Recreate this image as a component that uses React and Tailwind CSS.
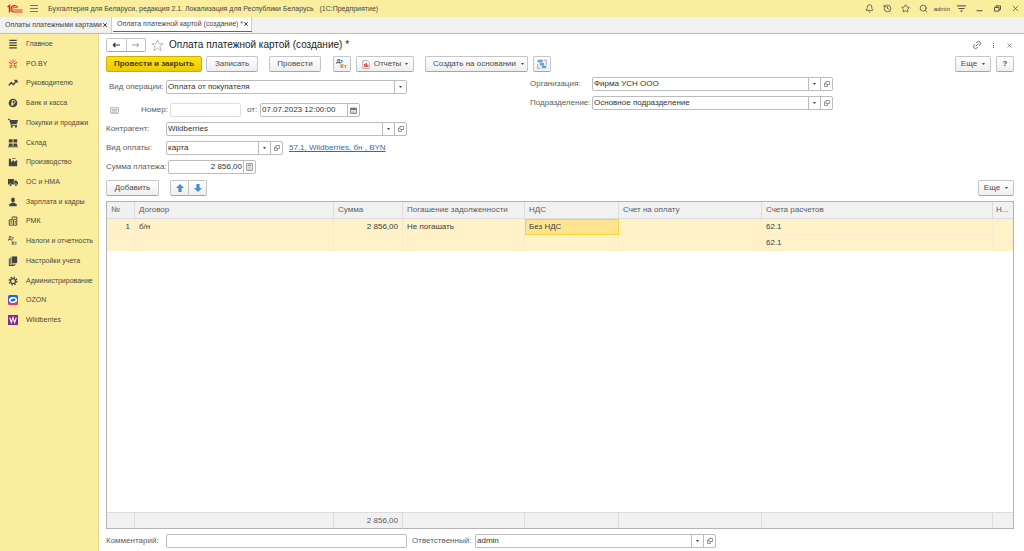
import React, { useState } from 'react';
import clsx from 'clsx';
import { Bell, History, Search, Star, Link2, X } from 'lucide-react';

const ICON = 'w-[10px] h-[10px] shrink-0';

const SectionIcon = ({ name }) => {
  const glyphs = {
    main: <path d="M1.500 1.500h9M1.500 4.500h9M1.500 7.500h9M1.500 10.500h9" stroke="#444" strokeWidth="1.500" />,
    poby: (
      <g stroke="#e2493b" strokeWidth="1.300" fill="none">
        <path d="M6 5V1M7 6l4-2M7 7l3 4M5 7l-3 4M5 6L1 4" />
        <path d="M3 1.500l1 2M9 1.500L8 3.500M1 8l2-.5M11 8l-2-.5M6 9v2" strokeWidth="0.8" />
      </g>
    ),
    chart: (
      <g fill="none" stroke="#444" strokeWidth="1.700">
        <path d="M1 9l3-3.500L6.500 8 10 3.500" />
        <path d="M7.500 2.500H11V6z" fill="#444" strokeWidth="0.6" />
      </g>
    ),
    bank: (
      <g>
        <circle cx="6" cy="6" r="5.200" fill="#444" />
        <path d="M5 9.500V3h1.800a1.600 1.600 0 010 3.400H3.800M3.800 8h3" fill="none" stroke="#fbed9e" strokeWidth="1.100" />
      </g>
    ),
    cart: (
      <g fill="#444">
        <path d="M0 1h2.300l.5 1.300H12L10.500 7.200H4.200l.3 1H11v1H3.500L1.600 2H0z" />
        <circle cx="4.500" cy="10.600" r="1.200" />
        <circle cx="9.500" cy="10.600" r="1.200" />
      </g>
    ),
    stock: <path d="M1 1.500h4.500v4H1zM6.500 1.500H11v4H6.500zM1 6.500h4.500v3H1zM6.500 6.500H11v3H6.500zM0 10h12v1H0z" fill="#444" />,
    factory: <path d="M1 11V2h2.500v4L7 3.500V6l4-2.500V11zM5 1.200h4v1H5z" fill="#444" />,
    truck: (
      <g fill="#444">
        <path d="M0 2.500h7V9H0zM7.600 4.200h2.400L12 6.500V9H7.600z" />
        <circle cx="3" cy="9.500" r="1.500" stroke="#fbed9e" strokeWidth="0.6" />
        <circle cx="9.500" cy="9.500" r="1.500" stroke="#fbed9e" strokeWidth="0.6" />
      </g>
    ),
    person: (
      <g fill="#444">
        <ellipse cx="6" cy="3.600" rx="2.300" ry="2.900" />
        <path d="M1.500 11V8.800L4.500 7h3l3 1.800V11z" />
      </g>
    ),
    rmk: (
      <g fill="none" stroke="#5a4a2c" strokeWidth="1.200">
        <path d="M1.500 4.500h5v6.500h-5zM5 3.500V1.200h5.500V11H7" />
        <path d="M3 6.500h2M3 8.500h2M7 4h2.500M8 6.500h1.500M8 8.500h1.500" />
      </g>
    ),
    books: (
      <g fill="#444">
        <path d="M4.500 0.500H11v8H4.500z" />
        <path d="M2.800 1.800h1v7.400H9.500v1H2.800z" />
        <path d="M1 3h1.100v7.900h6V12H1z" />
      </g>
    ),
    gear: (
      <g fill="none" stroke="#444">
        <circle cx="6" cy="6" r="3" strokeWidth="1.500" />
        <circle cx="6" cy="6" r="4.600" strokeWidth="1.600" strokeDasharray="1.800 1.810" />
      </g>
    ),
    ozon: (
      <g>
        <rect width="12" height="12" rx="2" fill="#1c62ea" />
        <path d="M0 8c3 3 9 2 12-3v5a2 2 0 01-2 2H2a2 2 0 01-2-2z" fill="#f0305c" />
        <ellipse cx="6" cy="6" rx="4" ry="2.600" fill="none" stroke="#fff" strokeWidth="1.900" transform="rotate(-12 6 6)" />
      </g>
    ),
    wb: (
      <g>
        <rect width="12" height="12" rx="1" fill="#8a2390" />
        <path d="M2 3l2 6 2-6 2 6 2-6" fill="none" stroke="#fff" strokeWidth="1.300" />
      </g>
    ),
  };

  if (name === 'tax') return <DtKt className={ICON} dt="#555" kt="#555" />;
  return (
    <svg viewBox="0 0 12 12" className={ICON} aria-hidden="true">
      {glyphs[name]}
    </svg>
  );
};

const DtKt = ({ className, dt = '#38648a', kt = '#e0602c' }) => (
  <svg viewBox="0 0 14 12" className={className} aria-hidden="true" fontFamily="Liberation Sans, sans-serif" fontWeight="700" fontSize="7">
    <text x="0" y="5" fill={dt}>Дт</text>
    <text x="5" y="11" fill={kt}>Кт</text>
  </svg>
);

const Logo = () => (
  <svg viewBox="0 0 32 18" className="w-4 h-[9px] shrink-0" fill="none" stroke="#e0262d" aria-hidden="true">
    <path d="M1 6l4-3v14" strokeWidth="3" />
    <path d="M21 8a6.500 6.500 0 10-6.500 8H31" strokeWidth="2.400" />
    <path d="M17.500 8a3 3 0 10-3 4H31" strokeWidth="1.800" />
  </svg>
);

const sections = [
  { icon: 'main', label: 'Главное' },
  { icon: 'poby', label: 'PO.BY' },
  { icon: 'chart', label: 'Руководителю' },
  { icon: 'bank', label: 'Банк и касса' },
  { icon: 'cart', label: 'Покупки и продажи' },
  { icon: 'stock', label: 'Склад' },
  { icon: 'factory', label: 'Производство' },
  { icon: 'truck', label: 'ОС и НМА' },
  { icon: 'person', label: 'Зарплата и кадры' },
  { icon: 'rmk', label: 'РМК' },
  { icon: 'tax', label: 'Налоги и отчетность' },
  { icon: 'books', label: 'Настройки учета' },
  { icon: 'gear', label: 'Администрирование' },
  { icon: 'ozon', label: 'OZON' },
  { icon: 'wb', label: 'Wildberries' },
];

const Caret = () => (
  <svg viewBox="0 0 6 4" className="h-[2px] w-[3px] shrink-0" aria-hidden="true">
    <path d="M0 0h6L3 4z" fill="#444" />
  </svg>
);

const OpenIcon = () => (
  <svg viewBox="0 0 12 12" className="h-[6px] w-[6px]" fill="none" stroke="#777" strokeWidth="1.500" aria-hidden="true">
    <path d="M4 1h7v6H4z" />
    <path d="M4 4H1v7h6V7" />
  </svg>
);

const CalendarIcon = () => (
  <svg viewBox="0 0 12 12" className="w-[7px] h-[7px]" fill="none" stroke="#666" strokeWidth="1.400" aria-hidden="true">
    <path d="M1 2h10v9H1z" />
    <path d="M1 3.500h10" strokeWidth="3" />
    <path d="M3 7h6M3 9h6" strokeWidth="1" strokeDasharray="1.500 0.800" />
  </svg>
);

const CalcIcon = () => (
  <svg viewBox="0 0 12 14" className="w-[7px] h-2" fill="none" stroke="#777" strokeWidth="1.400" aria-hidden="true">
    <path d="M1 1h10v12H1z" />
    <path d="M3 4h6" strokeWidth="2" />
    <path d="M3 7.500h6M3 10.500h6" strokeDasharray="1.500 0.800" />
  </svg>
);

const adornments = {
  list: { title: 'Выбрать', icon: <Caret /> },
  open: { title: 'Открыть', icon: <OpenIcon /> },
  calendar: { title: 'Календарь', icon: <CalendarIcon /> },
  calc: { title: 'Калькулятор', icon: <CalcIcon /> },
};

const Field = ({ id, label, labelClass, value = '', buttons = [], className, inputClass, pale }) => {
  const [text, setText] = useState(value);

  return (
    <div className="flex items-center">
      <label htmlFor={id} className={clsx('shrink-0 whitespace-nowrap text-[#5c5c5c]', labelClass)}>
        {label}
      </label>
      <div
        className={clsx(
          'flex h-[14px] rounded-[2px] border bg-white',
          pale ? 'border-[#dedede]' : 'border-[#bcbcbc]',
          className
        )}
      >
        <input
          id={id}
          type="text"
          value={text}
          onChange={(e) => setText(e.target.value)}
          className={clsx('min-w-0 flex-1 px-px text-[#333] outline-none', inputClass)}
        />
        {buttons.map((kind) => (
          <button
            key={kind}
            type="button"
            aria-label={adornments[kind].title}
            className="flex w-3 shrink-0 items-center justify-center border-l border-[#bcbcbc]"
          >
            {adornments[kind].icon}
          </button>
        ))}
      </div>
    </div>
  );
};

const Button = ({ children, className, primary, ...props }) => (
  <button
    type="button"
    className={clsx(
      'flex h-4 shrink-0 items-center justify-center whitespace-nowrap rounded-[2px] border',
      primary
        ? 'border-[#d0ac00] bg-linear-to-b from-[#fbe116] to-[#ecca00] font-bold text-[#4a4012]'
        : 'border-[#c6c6c6] border-b-[#a6a6a6] bg-linear-to-b from-white to-[#eeeeee] text-[#4c4c4c]',
      className
    )}
    {...props}
  >
    {children}
  </button>
);

const MoreButton = () => (
  <Button className="w-9 gap-[5px]">
    Еще <Caret />
  </Button>
);

const TitleBar = () => (
  <header className="flex h-[17px] items-center bg-[#fbed9e] pl-[7px] pr-1 text-[#444]">
    <Logo />
    <button type="button" aria-label="Меню" className="ml-[7px] flex w-2 flex-col gap-[2px]">
      <span className="h-px bg-[#777]" />
      <span className="h-px bg-[#777]" />
      <span className="h-px bg-[#777]" />
    </button>
    <div className="ml-[10px] flex-1 whitespace-pre text-[7px]">
      Бухгалтерия для Беларуси, редакция 2.1. Локализация для Республики Беларусь   (1С:Предприятие)
    </div>
    <div className="flex items-center gap-[9px]">
      <button type="button" aria-label="Уведомления"><Bell className="h-[9px] w-[9px]" /></button>
      <button type="button" aria-label="История"><History className="h-[9px] w-[9px]" /></button>
      <button type="button" aria-label="Избранное"><Star className="h-[9px] w-[9px]" /></button>
      <button type="button" aria-label="Поиск"><Search className="h-[9px] w-[9px]" /></button>
    </div>
    <button type="button" className="ml-[6px] text-[6px]">admin</button>
    <div className="ml-[7px] flex items-center gap-[9px]">
      <button type="button" aria-label="Настройки">
        <svg viewBox="0 0 12 12" className="h-[9px] w-[9px]" fill="none" stroke="#444" strokeWidth="1.300">
          <path d="M0 2.500h12M2 6h8" />
          <path d="M4 8.800h4L6 11z" fill="#444" stroke="none" />
        </svg>
      </button>
      <button type="button" aria-label="Свернуть">
        <svg viewBox="0 0 12 12" className="h-[9px] w-[9px]" stroke="#444" strokeWidth="1.300">
          <path d="M2 9h8" />
        </svg>
      </button>
      <button type="button" aria-label="Развернуть">
        <svg viewBox="0 0 12 12" className="h-[9px] w-[9px]" fill="none" stroke="#444" strokeWidth="1.200">
          <path d="M2 4.500h6v5H2zM4 4.500v-2h6v5H8" />
        </svg>
      </button>
      <button type="button" aria-label="Закрыть программу"><X className="h-[9px] w-[9px]" /></button>
    </div>
  </header>
);

const Tabs = () => (
  <nav className="flex h-[17px] border-b border-[#bdbdbd] bg-[#f1f1f1] text-[7px] text-[#444]">
    <div className="flex w-28 items-center justify-between border-r border-[#cfcfcf] pl-[5px] pr-[3px]">
      <a href="#list" className="whitespace-nowrap">Оплаты платежными картами</a>
      <button type="button" aria-label="Закрыть вкладку" className="shrink-0"><X className="h-[6px] w-[6px]" strokeWidth={4} /></button>
    </div>
    <div className="flex w-[140px] border-r border-[#cfcfcf] bg-white px-px">
      <div className="mb-px flex flex-1 items-center justify-between border-b border-[#149252] pl-1 pr-[3px]">
        <a href="#create" className="whitespace-nowrap">Оплата платежной картой (создание) *</a>
        <button type="button" aria-label="Закрыть вкладку" className="shrink-0"><X className="h-[6px] w-[6px]" strokeWidth={4} /></button>
      </div>
    </div>
  </nav>
);

const Sidebar = () => (
  <aside className="w-[99px] shrink-0 border-r border-[#e6d98f] bg-[#fbed9e]">
    <ul className="flex h-[296px] flex-col text-[7px] text-[#4a4a3c]">
      {sections.map(({ icon, label }) => (
        <li key={label} className="flex-1">
          <a href="#section" className="flex h-full items-center gap-2 whitespace-nowrap pl-2">
            <SectionIcon name={icon} />
            {label}
          </a>
        </li>
      ))}
    </ul>
  </aside>
);

const FormHeader = () => (
  <div className="flex h-[14px] items-center text-[#555]">
    <div className="flex h-[14px] w-10 rounded-[2px] border border-[#c2c2c2] border-b-[#a6a6a6]">
      <button type="button" aria-label="Назад" className="flex flex-1 items-center justify-center border-r border-[#cccccc]">
        <svg viewBox="0 0 12 8" className="h-[6px] w-2" fill="none" stroke="#333" strokeWidth="1.800">
          <path d="M12 4H2M5 1L2 4l3 3" />
        </svg>
      </button>
      <button type="button" aria-label="Вперед" className="flex flex-1 items-center justify-center">
        <svg viewBox="0 0 12 8" className="h-[6px] w-2" fill="none" stroke="#999" strokeWidth="1.400">
          <path d="M0 4h10M7 1l3 3-3 3" />
        </svg>
      </button>
    </div>
    <button type="button" aria-label="В избранное" className="ml-[5px]">
      <svg viewBox="0 0 24 24" className="h-[13px] w-[13px]" fill="none" stroke="#aaa" strokeWidth="1.500">
        <path d="M12 1.500l2.800 7.300h7.700l-6.200 4.800 2.300 8L12 17l-6.600 4.600 2.300-8L1.500 8.800h7.700z" />
      </svg>
    </button>
    <h1 className="ml-[5px] flex-1 text-[10px] text-[#222]">Оплата платежной картой (создание) *</h1>
    <button type="button" aria-label="Ссылка">
      <Link2 className="h-[10px] w-[10px] -rotate-45" strokeWidth={1.8} />
    </button>
    <button type="button" aria-label="Действия" className="ml-[11px] flex flex-col gap-px">
      <span className="h-px w-px bg-[#555]" />
      <span className="h-px w-px bg-[#555]" />
      <span className="h-px w-px bg-[#555]" />
    </button>
    <button type="button" aria-label="Закрыть" className="ml-3 mr-px">
      <X className="h-[7px] w-[7px]" />
    </button>
  </div>
);

const CommandBar = () => (
  <div className="mt-1 flex items-center">
    <Button primary className="w-24">Провести и закрыть</Button>
    <Button className="ml-1 w-[52px]">Записать</Button>
    <Button className="ml-[11px] w-[52px]">Провести</Button>
    <Button className="ml-3 w-[18px]" aria-label="Проводки">
      <DtKt className="h-[10px] w-3" />
    </Button>
    <Button className="ml-[5px] w-[58px] gap-1">
      <svg viewBox="0 0 12 14" className="h-[9px] w-2" aria-hidden="true">
        <path d="M1 1h7l3 3v9H1z" fill="#fff" stroke="#888" />
        <path d="M3 6h2v5H3zM5.500 4.500h2V11h-2zM8 7h1.500v4H8z" fill="#d8403a" />
      </svg>
      Отчеты <Caret />
    </Button>
    <Button className="ml-[11px] w-[103px] gap-[5px] pl-1">
      Создать на основании <Caret />
    </Button>
    <Button className="ml-[5px] w-[18px]" aria-label="Структура подчиненности">
      <svg viewBox="0 0 14 14" className="h-[10px] w-[10px]" aria-hidden="true">
        <path d="M1 1h7v4H1zM4 5.500h6v3.500H4zM7 9.500h6V13H7z" fill="#6f9fd0" />
        <path d="M9 1.500h4V8M1 7v6h4" fill="none" stroke="#7ca6d2" strokeWidth="1.200" />
      </svg>
    </Button>
    <div className="ml-auto flex gap-[5px]">
      <MoreButton />
      <Button className="w-[18px] font-bold" aria-label="Справка">?</Button>
    </div>
  </div>
);

const DocumentForm = () => (
  <div className="mt-[5px] grid grid-cols-[424px_minmax(0,1fr)] items-start">
    <div className="flex flex-col gap-[5px] pt-[3px]">
      <Field
        id="operation"
        label="Вид операции:"
        labelClass="w-[60px] pl-[3px]"
        value="Оплата от покупателя"
        buttons={['list']}
        className="w-[241px]"
      />
      <div className="mt-1 flex items-center">
        <svg viewBox="0 0 16 12" className="ml-1 mr-[22px] h-[7px] w-[9px] shrink-0" fill="none" stroke="#aaa" strokeWidth="1.500" aria-hidden="true">
          <path d="M1 1h14v10H1zM3 4h10M3 6.500h10M3 9h10" />
        </svg>
        <Field id="number" label="Номер:" labelClass="w-[29px]" className="w-[71px]" pale />
        <Field
          id="date"
          label="от:"
          labelClass="ml-[6px] w-[13px]"
          value="07.07.2023 12:00:00"
          buttons={['calendar']}
          className="w-[100px]"
        />
      </div>
      <Field
        id="contractor"
        label="Контрагент:"
        labelClass="w-[60px]"
        value="Wildberries"
        buttons={['list', 'open']}
        className="w-[241px]"
      />
      <div className="flex items-center">
        <Field
          id="payment"
          label="Вид оплаты:"
          labelClass="w-[60px]"
          value="карта"
          buttons={['list', 'open']}
          className="w-[117px]"
        />
        <a href="#account" className="ml-[6px] text-[#2c6db0] underline">57.1, Wildberries, бн , BYN</a>
      </div>
      <Field
        id="amount"
        label="Сумма платежа:"
        labelClass="w-[62px]"
        value="2 856,00"
        buttons={['calc']}
        className="w-[88px]"
        inputClass="text-right"
      />
    </div>
    <div className="flex flex-col gap-[5px]">
      <Field
        id="organization"
        label="Организация:"
        labelClass="w-[62px]"
        value="Фирма УСН ООО"
        buttons={['list', 'open']}
        className="w-[241px]"
      />
      <Field
        id="department"
        label="Подразделение:"
        labelClass="w-[62px]"
        value="Основное подразделение"
        buttons={['list', 'open']}
        className="w-[241px]"
      />
    </div>
  </div>
);

const TableToolbar = () => (
  <div className="mt-[6px] flex items-center">
    <Button className="w-[53px]">Добавить</Button>
    <div className="ml-[11px] flex">
      <Button className="w-[19px] rounded-r-none" aria-label="Переместить вверх">
        <svg viewBox="0 0 10 10" className="h-2 w-2"><path d="M5 0l5 5H7v5H3V5H0z" fill="#4a8ed0" /></svg>
      </Button>
      <Button className="w-[18px] rounded-l-none border-l-0" aria-label="Переместить вниз">
        <svg viewBox="0 0 10 10" className="h-2 w-2"><path d="M5 10l5-5H7V0H3v5H0z" fill="#4a8ed0" /></svg>
      </Button>
    </div>
    <div className="ml-auto">
      <MoreButton />
    </div>
  </div>
);

const columns = [
  { title: '№', width: 'w-7' },
  { title: 'Договор', width: 'w-[199px]' },
  { title: 'Сумма', width: 'w-[69px]' },
  { title: 'Погашение задолженности', width: 'w-[122px]' },
  { title: 'НДС', width: 'w-[94px]' },
  { title: 'Счет на оплату', width: 'w-[143px]' },
  { title: 'Счета расчетов', width: '' },
  { title: 'Н...', width: 'w-5' },
];

const PaymentsTable = () => (
  <div className="mt-[5px] flex flex-1 border border-[#b4b4b4]">
    <table className="w-full table-fixed border-separate border-spacing-0 text-[#404040]">
      <colgroup>
        {columns.map(({ title, width }) => <col key={title} className={width} />)}
      </colgroup>
      <thead>
        <tr className="h-[17px] bg-[#f1f1f1] text-left text-[#5c5c5c]">
          {columns.map(({ title }) => (
            <th key={title} className="whitespace-nowrap border-b border-r border-[#dcdcdc] p-0 pl-1 font-normal last:border-r-0 last:pl-[3px]">
              {title}
            </th>
          ))}
        </tr>
      </thead>
      <tbody>
        <tr className="h-4 bg-[#fff2c8] [&>td]:border-r [&>td]:border-[#f8ecd0] [&>td]:p-0 [&>td]:px-1 [&>td]:align-middle">
          <td className="text-right">1</td>
          <td>б/н</td>
          <td className="text-right">2 856,00</td>
          <td>Не погашать</td>
          <td className="bg-[#ffe48f] outline outline-1 -outline-offset-1 outline-[#fbd334]">Без НДС</td>
          <td />
          <td className="border-b">62.1</td>
          <td />
        </tr>
        <tr className="h-4 bg-[#fff2c8] [&>td]:border-r [&>td]:border-[#f8ecd0] [&>td]:p-0 [&>td]:px-1">
          <td /><td /><td /><td /><td /><td />
          <td>62.1</td>
          <td />
        </tr>
        <tr>
          <td colSpan={8} className="bg-white" />
        </tr>
      </tbody>
      <tfoot>
        <tr className="h-4 bg-[#f1f1f1] text-[#5c5c5c]">
          {columns.map(({ title }) => (
            <td key={title} className="border-r border-t border-[#dcdcdc] p-0 px-1 text-right last:border-r-0">
              {title === 'Сумма' && '2 856,00'}
            </td>
          ))}
        </tr>
      </tfoot>
    </table>
  </div>
);

const App = () => {
  return (
    <div className="flex min-h-screen flex-col bg-white font-['Liberation_Sans',Arial,sans-serif] text-[8px] leading-[10px]">
      <TitleBar />
      <Tabs />
      <div className="flex flex-1">
        <Sidebar />
        <main className="flex min-w-0 flex-1 flex-col pb-[3px] pl-[7px] pr-[10px] pt-1">
          <FormHeader />
          <CommandBar />
          <DocumentForm />
          <TableToolbar />
          <PaymentsTable />
          <div className="mt-[5px] flex items-center">
            <Field id="comment" label="Комментарий:" labelClass="w-[60px]" className="w-[241px]" />
            <Field
              id="responsible"
              label="Ответственный:"
              labelClass="ml-[5px] w-[63px]"
              value="admin"
              buttons={['list', 'open']}
              className="w-[241px]"
            />
          </div>
        </main>
      </div>
    </div>
  );
};

export default App;
